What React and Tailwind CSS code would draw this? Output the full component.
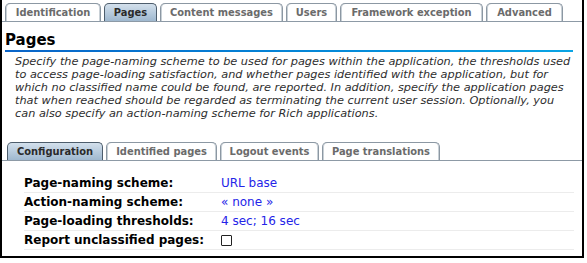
import React from "react";

const topTabs = [
  { label: "Identification", w: "w-[96px]" },
  { label: "Pages", w: "w-[53px]" },
  { label: "Content messages", w: "w-[123px]" },
  { label: "Users", w: "w-[51px]" },
  { label: "Framework exception", w: "w-[143px]" },
  { label: "Advanced", w: "w-[77px]" },
];

const subTabs = [
  { label: "Configuration", w: "w-[96px]" },
  { label: "Identified pages", w: "w-[111px]" },
  { label: "Logout events", w: "w-[99px]" },
  { label: "Page translations", w: "w-[118px]" },
];

const intro = [
  "Specify the page-naming scheme to be used for pages within the application, the thresholds used",
  "to access page-loading satisfaction, and whether pages identified with the application, but for",
  "which no classified name could be found, are reported. In addition, specify the application pages",
  "that when reached should be regarded as terminating the current user session. Optionally, you",
  "can also specify an action-naming scheme for Rich applications.",
];

const rows = [
  { label: "Page-naming scheme:", value: "URL base" },
  { label: "Action-naming scheme:", value: "« none »" },
  { label: "Page-loading thresholds:", value: "4 sec; 16 sec" },
  { label: "Report unclassified pages:", checkbox: true },
];

function Tab({ label, w, active }) {
  return (
    <div
      className={`${w} h-[18px] flex items-center justify-center whitespace-nowrap rounded-t-[5px] border border-b-0 text-[11px] font-bold leading-none ${
        active
          ? "bg-gradient-to-b from-[#d3e0ec] to-[#9fb8cf] border-[#4d5d6c] text-[#2a2a2a]"
          : "bg-white border-[#8c98a3] text-[#6b6b6b] shadow-[inset_1px_0_0_#c8d0d6,inset_-1px_0_0_#c8d0d6]"
      }`}
      style={{ fontFamily: '"DejaVu Sans Condensed", "DejaVu Sans", sans-serif' }}
    >
      {label}
    </div>
  );
}

function TabRow({ tabs, active, pad }) {
  return (
    <div className={`flex items-end gap-[3px] ${pad} border-b border-[#8d9aa6]`}>
      {tabs.map((t) => (
        <Tab key={t.label} label={t.label} w={t.w} active={t.label === active} />
      ))}
    </div>
  );
}

export default function App() {
  return (
    <div
      className="w-[584px] h-[258px] bg-white border-2 border-t-0 border-black pt-[3px] overflow-hidden"
      style={{ fontFamily: '"DejaVu Sans", Verdana, sans-serif' }}
    >
      <TabRow tabs={topTabs} active="Pages" pad="pl-[3px]" />

      <h1 className="mt-[9px] ml-[3px] text-[15px] font-bold leading-[18px] text-black">Pages</h1>
      <div className="mt-[1px] ml-[3px] mr-[9px] h-[2px] bg-gradient-to-r from-[#0a64c8] to-[#0aa4e4]" />

      <div className="mt-[3px] ml-[13px] text-[11.3px] italic leading-[13px] text-[#2e2e2e] whitespace-nowrap">
        {intro.map((line) => (
          <div key={line}>{line}</div>
        ))}
      </div>

      <div className="mt-[22px]">
        <TabRow tabs={subTabs} active="Configuration" pad="pl-[5px]" />
      </div>

      <div className="mt-[13px] ml-[22px] mr-[8px]">
        {rows.map((r) => (
          <div key={r.label} className="flex items-center h-[19px] border-b border-[#ececec]">
            <div className="w-[197px] text-[12px] font-bold text-black">{r.label}</div>
            {r.checkbox ? (
              <div className="w-[11px] h-[11px] border border-[#222] rounded-[1px] bg-white" />
            ) : (
              <div className="text-[12px] text-[#2424e8]">{r.value}</div>
            )}
          </div>
        ))}
      </div>
    </div>
  );
}
